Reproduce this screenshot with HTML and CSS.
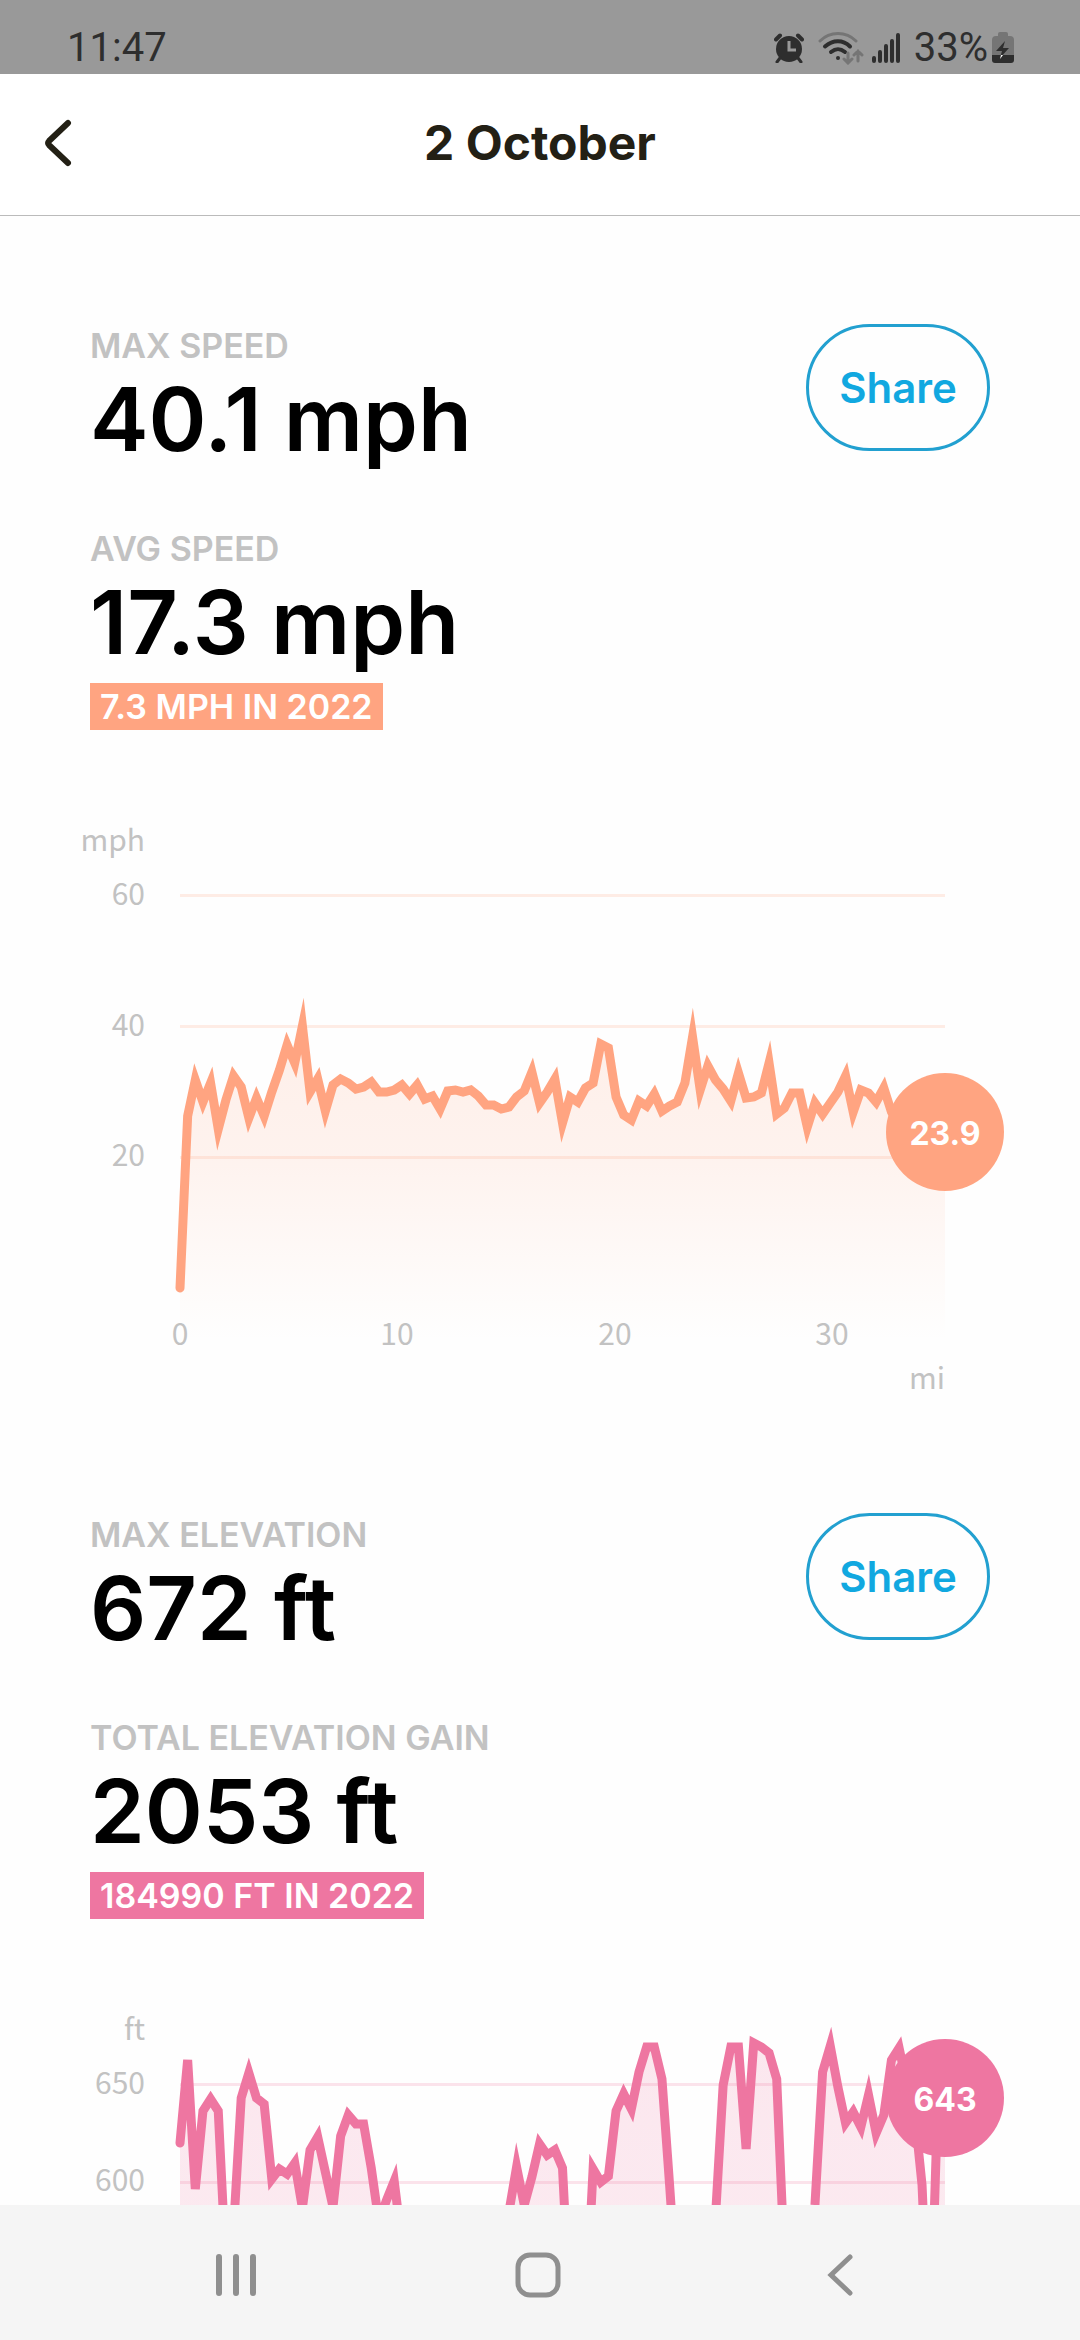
FILE: index.html
```html
<!DOCTYPE html>
<html lang="en">
<head>
<meta charset="utf-8">
<meta name="viewport" content="width=device-width, initial-scale=1">
<title>2 October</title>
<link rel="stylesheet" href="styles.css">
</head>
<body>
<div class="app">
  <div class="status-bar">
    <span>11:47</span>
    <div class="status-icons">
      <svg class="icon-alarm" viewBox="0 0 30 30" width="30" height="30" aria-hidden="true">
        <circle cx="15" cy="16" r="13" fill="#2e2e2e"/>
        <path d="M2 6.500l4-4M28 6.500l-4-4" stroke="#2e2e2e" stroke-width="4" stroke-linecap="round"/>
        <path d="M6 25l-3 4M24 25l3 4" stroke="#2e2e2e" stroke-width="3" stroke-linecap="round"/>
        <path d="M15 8v9h7" fill="none" stroke="#999" stroke-width="3"/>
      </svg>
      <svg class="icon-wifi" viewBox="0 0 46 34" width="46" height="34" aria-hidden="true">
        <g fill="none" stroke-linecap="round" stroke-width="3">
          <path d="M2 10C12 0 28 0 38 10" stroke="#757575"/>
          <path d="M7 15.500c8-7 18-7 25 0" stroke="#2e2e2e" stroke-width="4"/>
          <path d="M13 21c5-4 9-4 14 0" stroke="#2e2e2e" stroke-width="4"/>
          <path d="M30 22v10M26 28l4 4 4-4M40 30V20M36 24l4-4 4 4" stroke="#757575"/>
        </g>
        <circle cx="20" cy="27" r="2" fill="#2e2e2e"/>
      </svg>
      <svg class="icon-signal" viewBox="0 0 28 32" width="28" height="32" aria-hidden="true">
        <path d="M2 26v3M8 20v9M14 14v15M20 9v20M26 3v26" stroke="#2e2e2e" stroke-width="4" stroke-linecap="round"/>
      </svg>
      <span>33%</span>
      <svg class="icon-battery" viewBox="0 0 22 32" width="22" height="32" aria-hidden="true">
        <path d="M6 4V2q0-2 2-2h6q2 0 2 2v2h2q4 0 4 4v16H0V8q0-4 4-4z" fill="#757575"/>
        <path d="M0 23h22v5q0 3-3 3H3q-3 0-3-3z" fill="#2e2e2e"/>
        <path d="M13 9L4 19h6L8 26l9-10h-6z" fill="#2e2e2e"/>
        <path d="M9 23h2l-3 4z" fill="#fff"/>
      </svg>
    </div>
  </div>

  <header class="header">
    <button class="back" type="button" aria-label="Back">
      <svg viewBox="0 0 28 48" width="28" height="48" aria-hidden="true">
        <path d="M24 4L5 22q-2 2 0 4l19 18" fill="none" stroke="#232015" stroke-width="6" stroke-linecap="round"/>
      </svg>
    </button>
    <h1 class="title">2 October</h1>
  </header>

  <main class="content">
    <section class="metric speed">
      <div class="summary">
        <div class="stats">
          <div class="stat">
            <h2 class="label">MAX SPEED</h2>
            <p class="value">40.1 mph</p>
          </div>
          <div class="stat">
            <h2 class="label">AVG SPEED</h2>
            <p class="value">17.3 mph</p>
            <p class="badge">7.3 MPH IN 2022</p>
          </div>
        </div>
        <button class="share" type="button">Share</button>
      </div>
      <svg class="chart" viewBox="0 0 1080 605" role="img" aria-label="Speed by distance">
        <defs>
          <linearGradient id="speed-fill" gradientUnits="userSpaceOnUse" x1="0" y1="226" x2="0" y2="540">
            <stop offset="0" stop-color="#ffa481" stop-opacity=".17"/>
            <stop offset=".4" stop-color="#ffa481" stop-opacity=".13"/>
            <stop offset=".9" stop-color="#ffa481" stop-opacity=".02"/>
            <stop offset="1" stop-color="#ffa481" stop-opacity="0"/>
          </linearGradient>
        </defs>
        <path class="grid" d="M180 95.500H945M180 226.500H945M180 357.500H945"/>
        <path class="area" data-base="540" fill="url(#speed-fill)"/>
        <polyline class="line" data-series="speed"/>
        <g class="axis axis-y">
          <text x="145" y="51">mph</text>
          <text x="145" y="105">60</text>
          <text x="145" y="236">40</text>
          <text x="145" y="366">20</text>
        </g>
        <g class="axis axis-x">
          <text x="180" y="545">0</text>
          <text x="397" y="545">10</text>
          <text x="615" y="545">20</text>
          <text x="832" y="545">30</text>
        </g>
        <g class="axis axis-y"><text x="945" y="589">mi</text></g>
        <circle class="marker" cx="945" cy="332" r="59"/>
        <text class="marker-text" x="945" y="345">23.9</text>
      </svg>
    </section>

    <section class="metric elevation">
      <div class="summary">
        <div class="stats">
          <div class="stat">
            <h2 class="label">MAX ELEVATION</h2>
            <p class="value">672 ft</p>
          </div>
          <div class="stat">
            <h2 class="label">TOTAL ELEVATION GAIN</h2>
            <p class="value">2053 ft</p>
            <p class="badge">184990 FT IN 2022</p>
          </div>
        </div>
        <button class="share" type="button">Share</button>
      </div>
      <svg class="chart" viewBox="0 0 1080 605" role="img" aria-label="Elevation by distance">
        <defs>
          <linearGradient id="elevation-fill" gradientUnits="userSpaceOnUse" x1="0" y1="50" x2="0" y2="540">
            <stop offset="0" stop-color="#ee76a1" stop-opacity=".17"/>
            <stop offset=".4" stop-color="#ee76a1" stop-opacity=".15"/>
            <stop offset="1" stop-color="#ee76a1" stop-opacity="0"/>
          </linearGradient>
        </defs>
        <path class="grid" d="M180 95.500H945M180 193.500H945"/>
        <path class="area" data-base="540" fill="url(#elevation-fill)"/>
        <polyline class="line" data-series="elevation"/>
        <g class="axis axis-y">
          <text x="145" y="51">ft</text>
          <text x="145" y="105">650</text>
          <text x="145" y="202">600</text>
        </g>
        <circle class="marker" cx="945" cy="109" r="59"/>
        <text class="marker-text" x="945" y="122">643</text>
      </svg>
    </section>
  </main>

  <nav class="nav-bar" aria-label="System">
    <button class="nav-button" type="button" aria-label="Recent apps">
      <svg viewBox="0 0 48 48" width="48" height="48" aria-hidden="true">
        <path d="M7 6v36M24 6v36M41 6v36" stroke="#8f8f8f" stroke-width="6" stroke-linecap="round"/>
      </svg>
    </button>
    <button class="nav-button" type="button" aria-label="Home">
      <svg viewBox="0 0 48 48" width="48" height="48" aria-hidden="true">
        <rect x="4" y="4" width="40" height="40" rx="12" fill="none" stroke="#8f8f8f" stroke-width="5"/>
      </svg>
    </button>
    <button class="nav-button" type="button" aria-label="Back">
      <svg viewBox="0 0 48 48" width="48" height="48" aria-hidden="true">
        <path d="M34 6L15 24l19 18" fill="none" stroke="#8f8f8f" stroke-width="5" stroke-linecap="round"/>
      </svg>
    </button>
  </nav>
</div>
<script src="charts.js"></script>
</body>
</html>
```

FILE: styles.css
```css
* {
  box-sizing: border-box;
}

body {
  margin: 0;
  background: #fefefe;
  color: #000;
  font-family: Inter, "Noto Sans", sans-serif;
}

h1,
h2,
p {
  margin: 0;
}

button {
  margin: 0;
  padding: 0;
  border: 0;
  background: none;
  font: inherit;
}

svg {
  display: block;
}

.app {
  display: flex;
  flex-direction: column;
  height: 100vh;
}

.status-bar {
  display: flex;
  flex: none;
  align-items: center;
  justify-content: space-between;
  height: 74px;
  padding: 22px 66px 0 67px;
  background: #999;
  color: #2e2e2e;
  font: 40px/52px Roboto, sans-serif;
}

.status-icons {
  display: flex;
  align-items: center;
}

.icon-wifi {
  margin-left: 14px;
}

.icon-signal {
  margin: 0 14px 0 8px;
}

.icon-battery {
  margin-left: 4px;
}

.header {
  display: grid;
  flex: none;
  grid-template-columns: 1fr auto 1fr;
  align-items: center;
  height: 142px;
  padding: 0 44px 4px;
  border-bottom: 1px solid #bbb;
  background: #fff;
}

.back {
  width: 48px;
}

.title {
  color: #232015;
  font-size: 48px;
  font-weight: 700;
  line-height: 64px;
}

.content {
  flex: 1;
  min-height: 0;
  overflow-y: auto;
  scrollbar-width: none;
}

.speed {
  --accent: #ffa481;
}

.elevation {
  --accent: #ee76a1;
}

.summary {
  display: flex;
  align-items: flex-start;
  justify-content: space-between;
  padding: 108px 90px 70px;
}

.stats {
  display: flex;
  flex-direction: column;
  gap: 57px;
}

.label {
  color: #c2c2c2;
  font-size: 34px;
  font-weight: 600;
  line-height: 44px;
}

.value {
  font-size: 88px;
  font-weight: 600;
  line-height: 102px;
}

.badge {
  width: fit-content;
  margin-top: 10px;
  padding: 0 10px;
  background: var(--accent);
  color: #fff;
  font-size: 34px;
  font-weight: 600;
  line-height: 47px;
}

.share {
  width: 184px;
  height: 127px;
  border: 3px solid #22a0d0;
  border-radius: 64px;
  color: #11a8e0;
  font-size: 42px;
  font-weight: 600;
}

.chart {
  width: 100%;
  height: auto;
}

.grid {
  stroke: var(--accent);
  stroke-opacity: .2;
  stroke-width: 3;
}

.line {
  fill: none;
  stroke: var(--accent);
  stroke-width: 9;
  stroke-linecap: round;
  stroke-miterlimit: 10;
}

.axis {
  fill: #c2c2c2;
  font-family: "Noto Sans CJK JP", sans-serif;
  font-size: 30px;
}

.axis-y {
  text-anchor: end;
}

.axis-x {
  text-anchor: middle;
}

.marker {
  fill: var(--accent);
}

.marker-text {
  fill: #fff;
  font-size: 32px;
  font-weight: 700;
  text-anchor: middle;
}

.nav-bar {
  display: flex;
  flex: none;
  align-items: center;
  height: 135px;
  padding: 4px 89px 0 85px;
  background: #f5f5f5;
}

.nav-button {
  display: flex;
  flex: 1;
  justify-content: center;
  padding: 24px 0;
}
```

FILE: charts.js
```js
const series = {
  speed: [
    488, 316, 280, 302, 283, 329, 300, 276, 287, 318, 298, 316, 292, 270, 245, 263, 226, 292, 279, 311,
    285, 279, 283, 289, 287, 282, 292, 292, 290, 285, 294, 285, 299, 296, 309, 291, 290, 292, 290, 296,
    305, 305, 309, 307, 297, 291, 272, 303, 292, 279, 323, 297, 302, 288, 283, 244, 248, 297, 315, 320,
    301, 306, 294, 311, 306, 302, 283, 237, 290, 266, 280, 289, 301, 273, 298, 297, 293, 263, 314, 308,
    293, 293, 327, 303, 314, 303, 292, 276, 312, 290, 293, 302, 288, 312, 322, 330, 330, 332, 332, 332, 332
  ],
  elevation: [
    154, 71, 200, 122, 110, 122, 277, 240, 109, 84, 109, 115, 190, 180, 185, 174, 219, 161, 148, 183,
    218, 147, 126, 135, 135, 179, 233, 211, 192, 254, 291, 291, 291, 291, 291, 291, 291, 291, 291, 291,
    291, 291, 291, 223, 178, 216, 188, 155, 166, 161, 179, 330, 291, 330, 180, 193, 187, 122, 105, 120,
    83, 58, 58, 90, 196, 308, 320, 320, 320, 320, 228, 96, 58, 58, 160, 54, 58, 64, 90, 271,
    308, 308, 308, 216, 83, 57, 98, 134, 123, 138, 106, 144, 126, 71, 59, 95, 121, 196, 374, 124, 110
  ]
};

const left = 180;
const right = 945;

document.querySelectorAll(".line").forEach((line) => {
  const values = series[line.dataset.series];
  const step = (right - left) / (values.length - 1);
  const points = values.map((y, i) => `${left + i * step},${y}`).join(" ");
  const area = line.parentNode.querySelector(".area");
  const base = area.dataset.base;
  line.setAttribute("points", points);
  area.setAttribute("d", `M${left},${base} L${points} L${right},${base}Z`);
});
```
